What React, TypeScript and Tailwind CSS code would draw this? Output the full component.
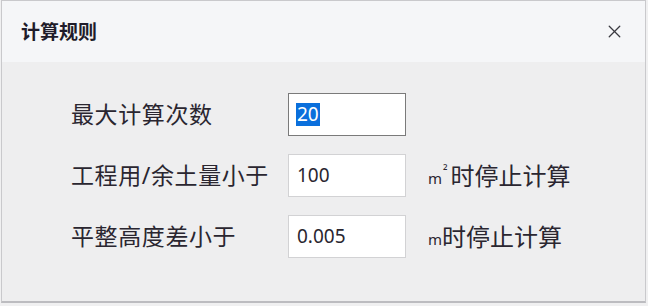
import { X } from "lucide-react";

const font = { fontFamily: '"Noto Sans", "Noto Sans CJK SC", sans-serif' };

function Row({
  label,
  value,
  selected,
  active,
  unit,
}: {
  label: string;
  value: string;
  selected?: boolean;
  active?: boolean;
  unit?: React.ReactNode;
}) {
  return (
    <div className="flex items-center h-[43px]">
      <div className="w-[217px] text-[23px] leading-none text-[#2a2630] tracking-[0.6px]">{label}</div>
      <div
        className={`w-[118px] h-[43px] flex items-center pl-[7px] bg-white border ${
          active ? "border-[#7a7a7a]" : "border-[#d2d2d4]"
        }`}
      >
        {selected ? (
          <span className="bg-[#0a6fdc] text-white text-[19px] leading-[23px] px-[1px]">{value}</span>
        ) : (
          <span className="text-[19px] leading-[23px] text-[#2a2630] pl-[1px]">{value}</span>
        )}
      </div>
      {unit && <div className="ml-[22px] text-[24px] leading-none text-[#2a2630]">{unit}</div>}
    </div>
  );
}

export default function App() {
  return (
    <div className="w-[648px] h-[306px] bg-[#f0f0f1]" style={font}>
      <div className="ml-[1px] w-[645px] h-[303px] border border-[#c9c9cc] border-b-2 border-b-[#bcbcc0] flex flex-col">
        {/* タイトル */}
        <div className="h-[61px] bg-[#f5f6f8] flex items-center justify-between pl-[19px] pr-[20px]">
          <span className="text-[19px] font-bold text-[#1f1c2a] pt-[1px]">计算规则</span>
          <X size={21} strokeWidth={1.5} className="text-[#3a3a40]" />
        </div>

        {/* 入力欄 */}
        <div className="flex-1 bg-[#eeeeef] pl-[69px] pt-[31px] flex flex-col gap-[18px]">
          <Row label="最大计算次数" value="20" selected active />
          <Row
            label="工程用/余土量小于"
            value="100"
            unit={
              <span>
                <span className="text-[15px] align-middle">m</span>
                <span className="text-[13px] align-top pl-[1px] pr-[3px]">²</span>时停止计算
              </span>
            }
          />
          <Row
            label="平整高度差小于"
            value="0.005"
            unit={
              <span>
                <span className="text-[15px] align-middle">m</span>时停止计算
              </span>
            }
          />
        </div>
      </div>
    </div>
  );
}
